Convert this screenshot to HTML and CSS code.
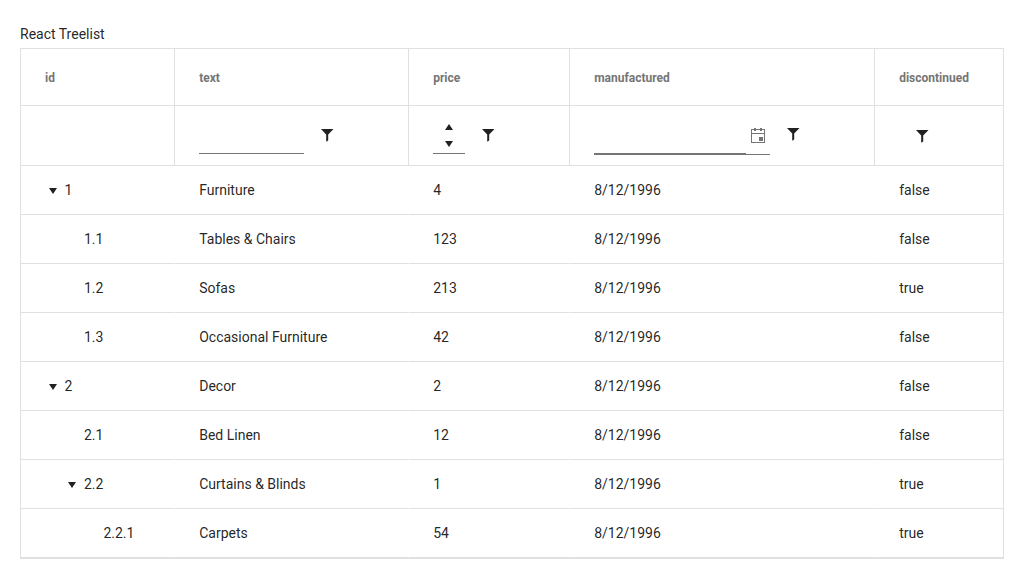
FILE: index.html
```html
<!DOCTYPE html>
<html lang="en">
<head>
<meta charset="utf-8">
<title>React Treelist</title>
<link rel="stylesheet" href="styles.css">
</head>
<body>
<svg class="defs" width="0" height="0"><symbol id="funnel" viewBox="0 0 16 16"><path d="M2 2h12.5L9.2 7.6V13.6L7.2 14.8V7.6z"/></symbol><symbol id="arrow" viewBox="0 0 8 6"><path d="M0 0h8L4 6z"/></symbol></svg>
<div class="caption">React Treelist</div>
<table class="treelist">
<colgroup><col class="c-id"><col class="c-text"><col class="c-price"><col class="c-date"><col class="c-disc"></colgroup>
<thead>
<tr class="head"><th>id</th><th>text</th><th>price</th><th>manufactured</th><th>discontinued</th></tr>
<tr class="filters">
<td></td>
<td><div class="filter"><span class="input input-text"></span><svg class="icon"><use href="#funnel"/></svg></div></td>
<td><div class="filter"><span class="input input-number"><svg width="8" height="24" viewBox="0 0 8 24"><path d="M0 6l4-6 4 6zM0 17h8l-4 6z"/></svg></span><svg class="icon"><use href="#funnel"/></svg></div></td>
<td><div class="filter date"><span class="input input-date"><span class="date-value"></span><svg class="calendar" width="16" height="16" viewBox="0 0 16 16"><path fill-rule="evenodd" d="M1 1h3V0h2v1h4V0h2v1h3v14H1zM2 2v3h12V2h-2v1h-2V2H6v1H4V2zM2 6v8h12V6zM9 9h4v4H9z"/></svg></span><svg class="icon"><use href="#funnel"/></svg></div></td>
<td><div class="filter only"><svg class="icon"><use href="#funnel"/></svg></div></td>
</tr>
</thead>
<tbody>
<tr><td class="l0"><svg class="arrow"><use href="#arrow"/></svg>1</td><td>Furniture</td><td>4</td><td>8/12/1996</td><td>false</td></tr>
<tr><td class="l1">1.1</td><td>Tables &amp; Chairs</td><td>123</td><td>8/12/1996</td><td>false</td></tr>
<tr><td class="l1">1.2</td><td>Sofas</td><td>213</td><td>8/12/1996</td><td>true</td></tr>
<tr><td class="l1">1.3</td><td>Occasional Furniture</td><td>42</td><td>8/12/1996</td><td>false</td></tr>
<tr><td class="l0"><svg class="arrow"><use href="#arrow"/></svg>2</td><td>Decor</td><td>2</td><td>8/12/1996</td><td>false</td></tr>
<tr><td class="l1">2.1</td><td>Bed Linen</td><td>12</td><td>8/12/1996</td><td>false</td></tr>
<tr><td class="l1a"><svg class="arrow"><use href="#arrow"/></svg>2.2</td><td>Curtains &amp; Blinds</td><td>1</td><td>8/12/1996</td><td>true</td></tr>
<tr><td class="l2">2.2.1</td><td>Carpets</td><td>54</td><td>8/12/1996</td><td>true</td></tr>
</tbody>
</table>
</body>
</html>
```
FILE: styles.css
```css
body { margin: 0; padding: 20px; font: 14px/28px Roboto, sans-serif; color: rgba(0, 0, 0, 0.87); background: #fff; }
.defs { display: block; position: absolute; }
.caption { height: 28px; }
.treelist { width: 984px; box-sizing: border-box; table-layout: fixed; border-collapse: separate; border-spacing: 0; border: 1px solid #e0e0e0; }
.c-id { width: 153px; }
.c-text { width: 234px; }
.c-price { width: 161px; }
.c-date { width: 305px; }
th, td { box-sizing: border-box; height: 49px; padding: 0 24px; text-align: left; border-bottom: 1px solid #e0e0e0; white-space: nowrap; }
.head th { height: 57px; padding-top: 2px; font-size: 12px; font-weight: 700; color: #757575; }
.head th + th { padding-left: 24.2px; }
.filters td { height: 60px; }
.head th + th, .filters td + td { border-left: 1px solid #e0e0e0; }
tbody td + td { border-left: 1px solid #fff; padding-left: 24.2px; }
.filter { display: flex; align-items: center; height: 36px; }
.icon { width: 16px; height: 16px; margin: 0 0 1px 15px; }
.only .icon { margin-left: 15px; margin-bottom: -1px; }
.date .icon { margin-bottom: 3px; }
.input { display: flex; box-sizing: border-box; height: 36px; align-items: center; border-bottom: 1px solid #757575; }
.input-text { width: 105px; }
.input-number { width: 32px; justify-content: center; padding-top: 2px; }
.input-date { width: 176px; height: 37px; padding-right: 4px; margin-bottom: -1px; }
.date-value { box-sizing: border-box; width: 152px; height: 100%; border-bottom: 1px solid #757575; }
svg { fill: #212121; }
.calendar { margin-left: 4px; fill: #757575; }
.arrow { width: 8px; height: 6px; margin: 0 7.5px 1px 4px; vertical-align: baseline; }
.l1 { padding-left: 63px; }
.l1a { padding-left: 43.4px; }
.l2 { padding-left: 82.4px; }
```
